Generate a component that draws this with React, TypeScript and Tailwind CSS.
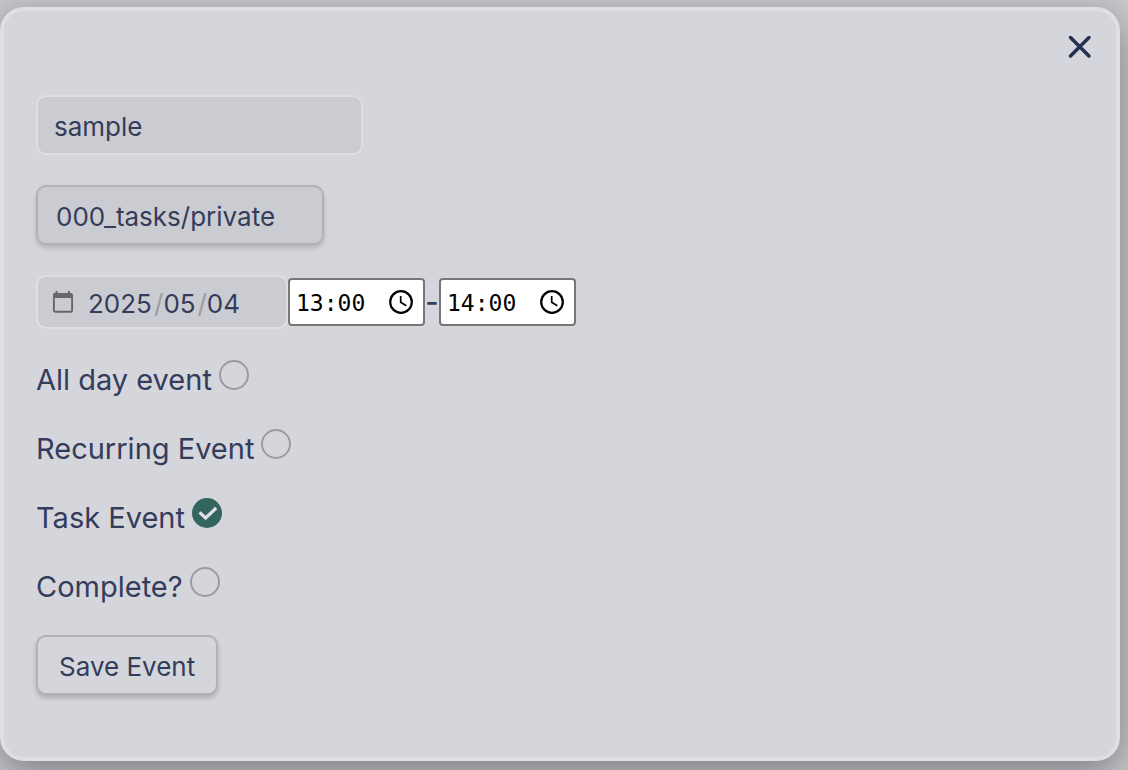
import { useState } from 'react';

function CalendarIcon() {
  return (
    <svg width="22" height="24" viewBox="0 0 22 24" fill="none" aria-hidden="true">
      <path d="M4.5 0v3M17 0v3" stroke="#66676b" strokeWidth="2" />
      <path d="M3 2h15a2 2 0 0 1 2 2v3H1V4a2 2 0 0 1 2-2z" fill="#66676b" />
      <rect x="1.9" y="3" width="18.2" height="17.8" rx="1.4" stroke="#66676b" strokeWidth="1.9" />
    </svg>
  );
}

function ClockIcon() {
  return (
    <svg width="24" height="24" viewBox="0 0 24 24" fill="none" stroke="black" aria-hidden="true">
      <circle cx="12" cy="12" r="10.8" strokeWidth="2.2" />
      <path d="M11.7 6v6.3l5.6 3.5" strokeWidth="1.7" />
    </svg>
  );
}

type TimeFieldProps = {
  label: string;
  value: string;
  onChange: (value: string) => void;
};

function TimeField({ label, value, onChange }: TimeFieldProps) {
  return (
    <div className="flex h-12 w-[137px] items-center justify-between rounded border-2 border-[#767676] bg-white pr-[10px] pl-[6px]">
      <input
        type="text"
        inputMode="numeric"
        aria-label={label}
        value={value}
        onChange={(e) => onChange(e.target.value)}
        className="w-[76px] bg-transparent pt-[2px] font-['DejaVu_Sans_Mono',monospace] text-[23px] leading-8 text-black outline-none"
      />
      <button type="button" aria-label={`Pick ${label.toLowerCase()}`}>
        <ClockIcon />
      </button>
    </div>
  );
}

type CheckRowProps = {
  id: string;
  label: string;
  checked: boolean;
  onChange: (checked: boolean) => void;
};

function CheckRow({ id, label, checked, onChange }: CheckRowProps) {
  return (
    <div className="flex h-[39px] items-start gap-[7px]">
      <label htmlFor={id} className="text-[29px] leading-[41px]">
        {label}
      </label>
      <span className="grid pt-px">
        <input
          id={id}
          type="checkbox"
          checked={checked}
          onChange={(e) => onChange(e.target.checked)}
          className="col-start-1 row-start-1 size-[30px] appearance-none rounded-full border-2 border-[#9b9ca3] checked:border-[#34655d] checked:bg-[#34655d]"
        />
        {checked && (
          <svg
            viewBox="0 0 30 30"
            fill="none"
            className="pointer-events-none col-start-1 row-start-1 size-[30px]"
            aria-hidden="true"
          >
            <path d="M7.6 14.4l6 5.6L24.2 10" stroke="#dfe2e6" strokeWidth="3.2" />
          </svg>
        )}
      </span>
    </div>
  );
}

export default function App() {
  const [title, setTitle] = useState('sample');
  const [calendar, setCalendar] = useState('000_tasks/private');
  const [date, setDate] = useState({ year: '2025', month: '05', day: '04' });
  const [start, setStart] = useState('13:00');
  const [end, setEnd] = useState('14:00');
  const [allDay, setAllDay] = useState(false);
  const [recurring, setRecurring] = useState(false);
  const [isTask, setIsTask] = useState(true);
  const [complete, setComplete] = useState(false);

  return (
    <div className="min-h-screen overflow-hidden bg-[#c8c9cd] pt-[7px] pr-2 pb-[9px] font-['Inter',sans-serif] text-[#343c5c]">
      <div
        role="dialog"
        aria-label="Edit event"
        className="rounded-3xl border-4 border-[#dddfe3] bg-[#d5d6db] shadow-[0_12px_40px_rgba(0,0,0,0.38)]"
      >
        <header className="mb-9 flex justify-end pt-6 pr-6">
          <button type="button" aria-label="Close" className="text-[#262f50]">
            <svg width="24" height="24" viewBox="0 0 24 24" fill="none" aria-hidden="true">
              <path d="M2.5 2.5l18.5 18.5M21 2.5l-18.5 18.5" stroke="currentColor" strokeWidth="3.5" strokeLinecap="round" />
            </svg>
          </button>
        </header>

        <form
          className="flex flex-col items-start gap-[30px] px-8 pb-[62px]"
          onSubmit={(e) => e.preventDefault()}
        >
          <input
            type="text"
            aria-label="Event title"
            value={title}
            onChange={(e) => setTitle(e.target.value)}
            className="h-[60px] w-[327px] rounded-[10px] border-2 border-[#dddfe3] bg-[#cbccd1] px-4 pt-[2px] text-[26px] outline-none"
          />

          <select
            aria-label="Calendar"
            value={calendar}
            onChange={(e) => setCalendar(e.target.value)}
            className="h-[60px] w-72 appearance-none rounded-[10px] border-2 border-[#b1b2b7] bg-[#cbccd1] px-[18px] pt-[2px] text-[26px] shadow-[0_3px_5px_rgba(0,0,0,0.16)] outline-none"
          >
            <option value="000_tasks/private">000_tasks/private</option>
          </select>

          {/* Date and time range */}
          <div className="flex items-center">
            <div
              role="group"
              aria-label="Date"
              className="flex h-[54px] w-[252px] items-center rounded-[10px] border-2 border-[#dddfe3] bg-[#cbccd1] pt-[2px] pl-[14px] text-[26px]"
            >
              <button type="button" aria-label="Open calendar" className="mr-[14px]">
                <CalendarIcon />
              </button>
              <input
                type="text"
                inputMode="numeric"
                aria-label="Year"
                value={date.year}
                onChange={(e) => setDate({ ...date, year: e.target.value })}
                className="w-[66px] bg-transparent outline-none"
              />
              <span className="text-[#9b9ca3]">/</span>
              <input
                type="text"
                inputMode="numeric"
                aria-label="Month"
                value={date.month}
                onChange={(e) => setDate({ ...date, month: e.target.value })}
                className="w-[34px] bg-transparent outline-none"
              />
              <span className="text-[#9b9ca3]">/</span>
              <input
                type="text"
                inputMode="numeric"
                aria-label="Day"
                value={date.day}
                onChange={(e) => setDate({ ...date, day: e.target.value })}
                className="w-[34px] bg-transparent outline-none"
              />
            </div>
            <TimeField label="Start time" value={start} onChange={setStart} />
            <span className="w-[14px] text-center text-[29px] font-medium">-</span>
            <TimeField label="End time" value={end} onChange={setEnd} />
          </div>

          <CheckRow id="all-day" label="All day event" checked={allDay} onChange={setAllDay} />
          <CheckRow id="recurring" label="Recurring Event" checked={recurring} onChange={setRecurring} />
          <CheckRow id="task" label="Task Event" checked={isTask} onChange={setIsTask} />
          <CheckRow id="complete" label="Complete?" checked={complete} onChange={setComplete} />

          <button
            type="submit"
            className="h-[60px] rounded-[10px] border-2 border-[#b1b2b7] bg-[#d5d6db] px-[21px] pt-[2px] text-[26px] shadow-[0_3px_5px_rgba(0,0,0,0.2)]"
          >
            Save Event
          </button>
        </form>
      </div>
    </div>
  );
}
